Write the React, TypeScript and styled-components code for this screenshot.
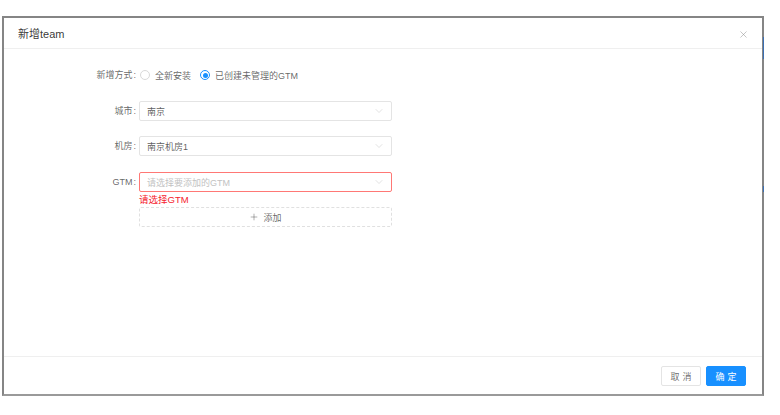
import React, { useState } from "react";
import styled, { createGlobalStyle } from "styled-components";
import { ChevronDown, X, Plus } from "lucide-react";

const GlobalStyle = createGlobalStyle`
  html, body {
    margin: 0;
    padding: 0;
    background: #fff;
  }
  body {
    font-family: "Liberation Sans", "Noto Sans CJK SC", sans-serif;
    color: rgba(0, 0, 0, 0.65);
  }
`;

const Page = styled.div`
  padding: 16px 16px 0 2px;
  width: 780px;
  height: 415px;
  box-sizing: border-box;
`;

const Modal = styled.div`
  position: relative;
  width: 762px;
  height: 380px;
  box-sizing: border-box;
  border: 2px solid #858585;
  border-bottom-color: #9a9a9a;
  background: #fff;
  display: flex;
  flex-direction: column;
`;

const EdgeMark = styled.div<{ $top: number; $h: number }>`
  position: absolute;
  right: -2px;
  top: ${(p) => p.$top}px;
  width: 1px;
  height: ${(p) => p.$h}px;
  background: #3b6fb3;
`;

const Header = styled.div`
  height: 30px;
  display: flex;
  align-items: center;
  justify-content: space-between;
  padding: 0 14px 0 14px;
  border-bottom: 1px solid #efefef;
`;

const Title = styled.div`
  font-size: 11px;
  color: rgba(0, 0, 0, 0.8);
`;

const CloseBtn = styled.button`
  border: 0;
  background: none;
  padding: 0;
  display: flex;
  color: #8c8c8c;
  margin-right: -1px;
  margin-top: 3px;
  cursor: pointer;
`;

const Body = styled.div`
  flex: 1;
  padding: 16px 0 0 0;
  border-bottom: 1px solid #efefef;
`;

const FormItem = styled.div<{ $gap?: number }>`
  display: flex;
  align-items: flex-start;
  margin-bottom: ${(p) => (p.$gap ?? 16)}px;
`;

const Label = styled.div`
  width: 135px;
  box-sizing: border-box;
  padding-right: 3px;
  text-align: right;
  font-size: 9px;
  line-height: 20px;
  color: rgba(0, 0, 0, 0.62);
  white-space: nowrap;
  span {
    margin-left: 1px;
  }
`;

const Control = styled.div`
  width: 253px;
`;

const RadioGroup = styled.div`
  display: flex;
  align-items: center;
  height: 20px;
  gap: 9px;
  padding-left: 1px;
`;

const RadioOption = styled.label`
  display: flex;
  align-items: center;
  gap: 5px;
  font-size: 9px;
  color: rgba(0, 0, 0, 0.62);
  cursor: pointer;
`;

const RadioDot = styled.span<{ $on: boolean }>`
  width: 10px;
  height: 10px;
  box-sizing: border-box;
  border-radius: 50%;
  border: 1px solid ${(p) => (p.$on ? "#1890ff" : "#d9d9d9")};
  display: flex;
  align-items: center;
  justify-content: center;
  &::after {
    content: "";
    width: 5px;
    height: 5px;
    border-radius: 50%;
    background: ${(p) => (p.$on ? "#1890ff" : "transparent")};
  }
`;

const Select = styled.div<{ $error?: boolean }>`
  height: 20px;
  box-sizing: border-box;
  border: 1px solid ${(p) => (p.$error ? "#ff7875" : "#e4e4e4")};
  border-radius: 2px;
  display: flex;
  align-items: center;
  justify-content: space-between;
  padding: 0 6px 0 7px;
  font-size: 9px;
`;

const Value = styled.span<{ $placeholder?: boolean }>`
  color: ${(p) => (p.$placeholder ? "#c2c2c2" : "rgba(0,0,0,0.65)")};
`;

const ErrorText = styled.div`
  font-size: 9.5px;
  line-height: 15px;
  color: #f5222d;
`;

const AddButton = styled.button`
  width: 100%;
  height: 20px;
  box-sizing: border-box;
  border: 1px dashed #e0e0e0;
  border-radius: 2px;
  background: #fff;
  display: flex;
  align-items: center;
  justify-content: center;
  gap: 4px;
  font-family: inherit;
  font-size: 9px;
  color: rgba(0, 0, 0, 0.62);
  padding: 0;
`;

const Footer = styled.div`
  height: 37px;
  display: flex;
  align-items: center;
  justify-content: flex-end;
  gap: 5px;
  padding: 0 16px 0 0;
`;

const Button = styled.button<{ $primary?: boolean }>`
  width: 40px;
  height: 20px;
  box-sizing: border-box;
  border-radius: 2px;
  border: 1px solid ${(p) => (p.$primary ? "#1890ff" : "#e4e4e4")};
  background: ${(p) => (p.$primary ? "#1890ff" : "#fff")};
  color: ${(p) => (p.$primary ? "#fff" : "rgba(0,0,0,0.6)")};
  font-family: inherit;
  font-size: 9px;
  letter-spacing: 3px;
  padding: 0 0 0 3px;
  margin-top: 1px;
`;

const selects = [
  { label: "城市", value: "南京" },
  { label: "机房", value: "南京机房1" },
];

const App = () => {
  const [mode, setMode] = useState<string>("existing");

  return (
    <>
      <GlobalStyle />
      <Page>
        <Modal>
          <EdgeMark $top={19} $h={22} />
          <EdgeMark $top={168} $h={6} />
          <Header>
            <Title>新增team</Title>
            <CloseBtn>
              <X size={11} strokeWidth={1.1} />
            </CloseBtn>
          </Header>
          <Body>
            <FormItem>
              <Label>
                新增方式<span>:</span>
              </Label>
              <Control>
                <RadioGroup>
                  <RadioOption onClick={() => setMode("new")}>
                    <RadioDot $on={mode === "new"} />
                    全新安装
                  </RadioOption>
                  <RadioOption onClick={() => setMode("existing")}>
                    <RadioDot $on={mode === "existing"} />
                    已创建未管理的GTM
                  </RadioOption>
                </RadioGroup>
              </Control>
            </FormItem>
            {selects.map((s, i) => (
              <FormItem key={s.label} $gap={i === 0 ? 15 : 16}>
                <Label>
                  {s.label}
                  <span>:</span>
                </Label>
                <Control>
                  <Select>
                    <Value>{s.value}</Value>
                    <ChevronDown size={12} color="#c4c4c4" strokeWidth={1} />
                  </Select>
                </Control>
              </FormItem>
            ))}
            <FormItem>
              <Label>
                GTM<span>:</span>
              </Label>
              <Control>
                <Select $error>
                  <Value $placeholder>请选择要添加的GTM</Value>
                  <ChevronDown size={12} color="#c4c4c4" strokeWidth={1} />
                </Select>
                <ErrorText>请选择GTM</ErrorText>
                <AddButton>
                  <Plus size={10} strokeWidth={1.2} />
                  添加
                </AddButton>
              </Control>
            </FormItem>
          </Body>
          <Footer>
            <Button>取消</Button>
            <Button $primary>确定</Button>
          </Footer>
        </Modal>
      </Page>
    </>
  );
};

export default App;
